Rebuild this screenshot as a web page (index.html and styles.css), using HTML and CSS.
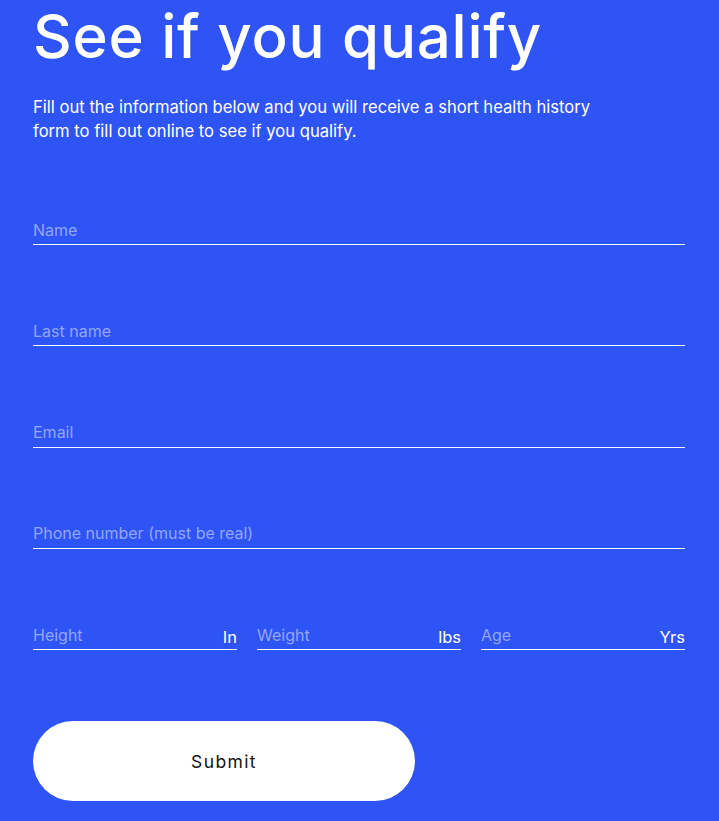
FILE: index.html
```html
<!DOCTYPE html>
<html lang="en">
<head>
<meta charset="utf-8">
<title>See if you qualify</title>
<link rel="stylesheet" href="styles.css">
</head>
<body>
<main class="page">
  <h1 class="title">See if you qualify</h1>
  <p class="intro">Fill out the information below and you will receive a short health history<br>form to fill out online to see if you qualify.</p>
  <form class="form">
    <label class="field"><input class="input" type="text" placeholder="Name"></label>
    <label class="field"><input class="input" type="text" placeholder="Last name"></label>
    <label class="field"><input class="input" type="email" placeholder="Email"></label>
    <label class="field"><input class="input" type="tel" placeholder="Phone number (must be real)"></label>
    <div class="row">
      <label class="field"><input class="input" type="text" placeholder="Height"><span class="unit">In</span></label>
      <label class="field"><input class="input" type="text" placeholder="Weight"><span class="unit">lbs</span></label>
      <label class="field"><input class="input" type="text" placeholder="Age"><span class="unit">Yrs</span></label>
    </div>
    <button class="submit" type="button">Submit</button>
  </form>
</main>
</body>
</html>
```
FILE: styles.css
```css
html, body {
  margin: 0;
  padding: 0;
  background: #2f54f5;
}
body {
  font-family: Inter, "Liberation Sans", sans-serif;
  color: #ffffff;
}
.page {
  padding: 6px 34px 20px 33px;
}
.title {
  margin: 0;
  font-size: 60px;
  line-height: 60px;
  font-weight: 500;
  letter-spacing: 0.75px;
}
.intro {
  margin: 29px 0 0;
  font-size: 16.6px;
  line-height: 24px;
  font-weight: 400;
}
.form {
  margin-top: 72px;
  display: flex;
  flex-direction: column;
  gap: 71.3px;
}
.field {
  display: flex;
  align-items: center;
  height: 30px;
  border-bottom: 1px solid #ffffff;
  box-sizing: border-box;
  min-width: 0;
}
.input {
  flex: 1;
  min-width: 0;
  width: 0;
  border: 0;
  outline: 0;
  padding: 0;
  background: transparent;
  font-family: Inter, "Liberation Sans", sans-serif;
  font-size: 16px;
  color: #ffffff;
}
.input::placeholder {
  color: #93a6fa;
}
.row {
  display: grid;
  grid-template-columns: repeat(3, minmax(0, 1fr));
  gap: 20px;
}
.unit {
  font-size: 16.5px;
  padding-top: 4px;
}
.submit {
  width: 382px;
  height: 80px;
  border: 0;
  border-radius: 40px;
  background: #ffffff;
  color: #111111;
  font-family: Inter, "Liberation Sans", sans-serif;
  font-size: 17.5px;
  letter-spacing: 1.4px;
}
```
